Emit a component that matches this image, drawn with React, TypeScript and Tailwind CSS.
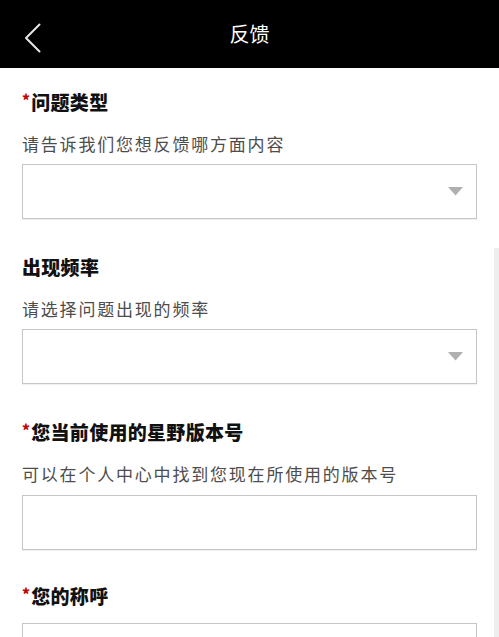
import React from 'react';

// Label with optional red required mark
const FieldLabel = ({ text, required }: { text: string; required?: boolean }) => (
  <div className="flex h-[24px] items-center text-[19px] font-black leading-[24px] tracking-[0.3px] text-[#111]">
    {required && <span className="mr-[1px] mt-[-6px] text-[15px] leading-none text-[#c40000]">*</span>}
    <span>{text}</span>
  </div>
);

const Hint = ({ text }: { text: string }) => (
  <div className="mt-[18px] h-[24px] text-[17px] leading-[24px] tracking-[1.8px] text-[#4d4d4d]">{text}</div>
);

const SelectBox = () => (
  <div className="mt-[8px] flex h-[55px] items-center justify-end border-[1.5px] border-[#c6c6c6] bg-white pr-[13px] shadow-[0_1px_1px_rgba(0,0,0,0.06)]">
    <svg width="15" height="9" viewBox="0 0 15 9">
      <path d="M0 0 L15 0 L7.5 8.5 Z" fill="#b0b0b0" />
    </svg>
  </div>
);

const InputBox = ({ className = 'mt-[9px]' }: { className?: string }) => (
  <div className={`${className} h-[55px] border-[1.5px] border-[#c6c6c6] bg-white shadow-[0_1px_1px_rgba(0,0,0,0.06)]`} />
);

export default function App() {
  return (
    <div
      className="relative h-[637px] w-[499px] overflow-hidden bg-white"
      style={{ fontFamily: '"Noto Sans CJK SC", "Noto Sans", sans-serif' }}
    >
      {/* Header */}
      <header className="relative flex h-[68px] items-center justify-center bg-black">
        <svg className="absolute left-[24px] top-[23px]" width="18" height="30" viewBox="0 0 18 30">
          <path d="M15.5 1.5 L2 15 L15.5 28.5" fill="none" stroke="#e6e6e6" strokeWidth="2" strokeLinecap="round" strokeLinejoin="round" />
        </svg>
        <h1 className="text-[20px] font-normal leading-none text-white">反馈</h1>
      </header>

      {/* Scroll track */}
      <div className="absolute right-0 top-[248px] h-[389px] w-[5px] bg-[#eeeeee]" />

      <main className="px-[22px] pt-[22px]">
        <FieldLabel text="问题类型" required />
        <Hint text="请告诉我们您想反馈哪方面内容" />
        <SelectBox />

        <div className="mt-[36px]">
          <FieldLabel text="出现频率" />
          <Hint text="请选择问题出现的频率" />
          <SelectBox />
        </div>

        <div className="mt-[36px]">
          <FieldLabel text="您当前使用的星野版本号" required />
          <Hint text="可以在个人中心中找到您现在所使用的版本号" />
          <InputBox />
        </div>

        <div className="mt-[34px]">
          <FieldLabel text="您的称呼" required />
          <InputBox className="mt-[15px]" />
        </div>
      </main>
    </div>
  );
}
